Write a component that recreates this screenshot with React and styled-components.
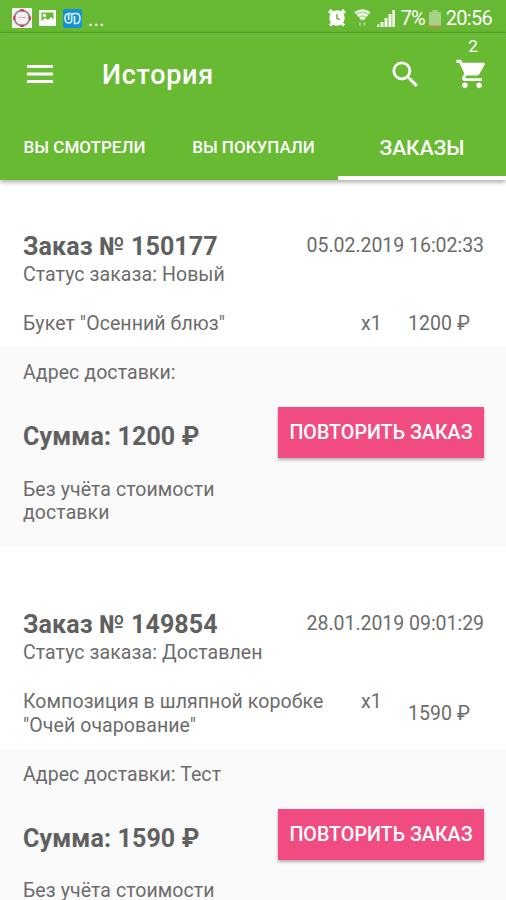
import React from 'react';
import styled, { createGlobalStyle } from 'styled-components';

const GlobalStyle = createGlobalStyle`
  * { box-sizing: border-box; }
  body {
    margin: 0;
    background: #fff;
    font-family: Roboto, "Liberation Sans", sans-serif;
    color: #6c6c6c;
  }
`;

const Screen = styled.div`
  display: flex;
  flex-direction: column;
  width: 506px;
  height: 900px;
  overflow: hidden;
`;

const StatusBar = styled.div`
  flex: none;
  display: flex;
  align-items: center;
  justify-content: space-between;
  height: 33px;
  padding: 4px 14px 0 12px;
  background: #67b832;
  border-bottom: 1px solid #5ca52c;
  color: #fff;
`;

const StatusGroup = styled.div`
  display: flex;
  align-items: center;
`;

const Glyph = styled.svg`
  flex: none;
  display: block;
  margin-left: ${p => p.$gap || 0}px;
`;

const StatusText = styled.span`
  font-size: 20px;
  line-height: 28px;
  margin-left: ${p => p.$gap || 0}px;
  padding-top: ${p => p.$drop || 0}px;
  letter-spacing: ${p => p.$spacing || 0}px;
  white-space: nowrap;
`;

const Header = styled.header`
  flex: none;
  position: relative;
  z-index: 1;
  height: 147px;
  background: #68ba33;
  color: #fff;
  box-shadow: 0 2px 5px rgba(0, 0, 0, 0.35);
`;

const Toolbar = styled.div`
  display: flex;
  align-items: center;
  height: 82px;
  padding: 0 17px 0 26px;
`;

const IconButton = styled.button`
  position: relative;
  display: flex;
  border: none;
  padding: 0;
  background: none;
  color: inherit;
  font-family: inherit;
  margin-left: ${p => p.$gap || 0}px;
`;

const Title = styled.h1`
  flex: 1;
  margin: 2px 0 0 48px;
  font-size: 27px;
  line-height: 32px;
  font-weight: 500;
  letter-spacing: 0.7px;
`;

const Badge = styled.span`
  position: absolute;
  top: -21px;
  left: 1px;
  width: 100%;
  text-align: center;
  font-size: 17px;
  line-height: 20px;
`;

const Tabs = styled.nav`
  display: grid;
  grid-template-columns: 169px 169px 168px;
  height: 65px;
`;

const Tab = styled.a`
  display: flex;
  align-items: center;
  justify-content: center;
  padding-top: ${p => (p.$active ? 4 : 2)}px;
  border-bottom: 4px solid ${p => (p.$active ? '#fff' : 'transparent')};
  font-size: ${p => (p.$active ? 21 : 17)}px;
  font-weight: 500;
  white-space: nowrap;
`;

const Order = styled.section`
  flex: none;
  padding-top: ${p => (p.$first ? 51 : 62)}px;
`;

const Row = styled.div`
  display: flex;
  justify-content: space-between;
  padding: 0 22px 0 23px;
`;

const Heading = styled.h2`
  margin: 0;
  padding-top: 1px;
  font-size: 25px;
  line-height: 29px;
  font-weight: 700;
  letter-spacing: 0.13px;
  color: #606060;
  white-space: nowrap;
`;

const Text = styled.div`
  font-size: 19.5px;
  line-height: 23.4px;
  letter-spacing: 0.08px;
  white-space: ${p => (p.$wrap ? 'normal' : 'nowrap')};
`;

const OrderDate = styled(Text)`
  padding-top: 3px;
  letter-spacing: -0.03px;
`;

const Status = styled(Text)`
  padding: 1.6px 23px 0;
`;

const Item = styled.div`
  display: grid;
  grid-template-columns: 338px 47px 1fr;
  padding: 26px 22px 11.9px 23px;
`;

const Price = styled(Text)`
  align-self: center;
`;

const Summary = styled.div`
  height: 200px;
  padding-top: 14px;
  background: #fafafa;
`;

const Address = styled(Text)`
  padding: 0 23px;
`;

const SumRow = styled(Row)`
  align-items: center;
  height: 51px;
  margin-top: 22.6px;
`;

const Total = styled(Heading)`
  padding-top: 7px;
`;

const RepeatButton = styled.button`
  width: 206px;
  height: 51px;
  padding: 0;
  border: none;
  background: #f14c82;
  color: #fff;
  font-family: inherit;
  font-size: 19.7px;
  font-weight: 500;
  white-space: nowrap;
  box-shadow: 0 2px 3px rgba(0, 0, 0, 0.3);
`;

const Note = styled(Text)`
  width: 240px;
  padding: 19.400px 0 0 23px;
`;

const orders = [
  {
    number: '150177',
    date: '05.02.2019 16:02:33',
    status: 'Новый',
    item: ['Букет "Осенний блюз"'],
    address: '',
    price: '1200 ₽',
  },
  {
    number: '149854',
    date: '28.01.2019 09:01:29',
    status: 'Доставлен',
    item: ['Композиция в шляпной коробке', '"Очей очарование"'],
    address: 'Тест',
    price: '1590 ₽',
  },
];

function StatusIcons() {
  return (
    <StatusBar>
      <StatusGroup>
        <Glyph width="20" height="20" viewBox="0 0 20 20">
          <rect width="20" height="20" fill="#f5f0f0" />
          <circle cx="10" cy="10" r="7.6" fill="none" stroke="#9a8d92" strokeWidth="2" />
          <circle cx="10" cy="10" r="7.8" fill="none" stroke="#c94468" strokeWidth="2.2" strokeDasharray="4 8.2" strokeDashoffset="2" />
          <path d="M6 9.5h8" stroke="#d9b5bf" strokeWidth="1.2" />
        </Glyph>
        <Glyph $gap={7} width="17" height="16" viewBox="0 0 17 16">
          <path fill="#fff" fillRule="evenodd" d="M1 0h15a1 1 0 0 1 1 1v14a1 1 0 0 1-1 1H1a1 1 0 0 1-1-1V1a1 1 0 0 1 1-1zM2.500 2.500v8.500l3.500-3 3 2 3-3 2.500 3V2.500z" />
          <circle cx="5.500" cy="5.500" r="1.700" fill="#fff" />
        </Glyph>
        <Glyph $gap={7} width="19" height="19" viewBox="0 0 19 19">
          <rect width="19" height="19" rx="2" fill="#1592d0" />
          <path d="M8.500 4.500H6C3 4.500 2 6.500 2 9s1 5 4 5c2 0 2.700-1 2.700-3V7c0-2 .8-2.500 2.300-2.500h2c3 0 4 2 4 4.500s-1 5.500-4 5.500h-1.500V7M5.700 5v6" fill="none" stroke="#d8f0fb" strokeWidth="1.600" />
        </Glyph>
        <StatusText $gap={6} $drop={1} $spacing={0.4}>...</StatusText>
      </StatusGroup>
      <StatusGroup>
        <Glyph width="18" height="18" viewBox="0 0 18 18">
          <circle cx="9" cy="9" r="7.700" fill="#fff" />
          <path d="M1 4l3-3M14 1l3 3M2 16.500l3-3M16 16.500l-3-3" stroke="#fff" strokeWidth="3" />
          <path d="M9 5v4.500l3 1" fill="none" stroke="#68ba33" strokeWidth="1.500" />
        </Glyph>
        <Glyph $gap={8} width="17" height="18" viewBox="0 0 17 18">
          <path d="M1 4Q8.500-1.500 16 4l-7.500 8z" fill="#b5dc9b" />
          <path d="M1 4Q8.500-1.500 16 4M3.500 7q5-3.500 10 0M6 10q2.500-2 5 0" fill="none" stroke="#f1f9ec" strokeWidth="1.800" />
          <path d="M6 13.500v3.500M10.500 13v3.500" stroke="#a9d68a" strokeWidth="1.800" />
        </Glyph>
        <Glyph $gap={6} width="18" height="18" viewBox="0 0 18 18">
          <path d="M0 15.500h2.500V18H0zM3.500 13h3v5h-3zM7.500 9h3v9h-3zM11.500 5h3v13h-3zM15.300 1H18v17h-2.700z" fill="#f3faee" />
        </Glyph>
        <StatusText $gap={6} $spacing={-1}>7%</StatusText>
        <Glyph $gap={4} width="12" height="17" viewBox="0 0 12 17">
          <path d="M3.500 0h5v2H12v15H0V2h3.500z" fill="#a5d386" />
          <path d="M0 15.500h12V17H0z" fill="#e5793f" />
        </Glyph>
        <StatusText $gap={5} $spacing={-0.7}>20:56</StatusText>
      </StatusGroup>
    </StatusBar>
  );
}

function OrderCard({ order, first }) {
  return (
    <Order $first={first}>
      <Row>
        <Heading>Заказ № {order.number}</Heading>
        <OrderDate>{order.date}</OrderDate>
      </Row>
      <Status>Статус заказа: {order.status}</Status>
      <Item>
        <div>
          {order.item.map(line => <Text key={line}>{line}</Text>)}
        </div>
        <Text>x1</Text>
        <Price>{order.price}</Price>
      </Item>
      <Summary>
        <Address>Адрес доставки: {order.address}</Address>
        <SumRow>
          <Total>Сумма: {order.price}</Total>
          <RepeatButton>ПОВТОРИТЬ ЗАКАЗ</RepeatButton>
        </SumRow>
        <Note $wrap>Без учёта стоимости доставки</Note>
      </Summary>
    </Order>
  );
}

export default function App() {
  return (
    <Screen>
      <GlobalStyle />
      <StatusIcons />
      <Header>
        <Toolbar>
          <IconButton>
            <Glyph width="28" height="20" viewBox="0 0 28 20">
              <path d="M1 2.500h26M1 10h26M1 17.500h26" stroke="#fff" strokeWidth="3" />
            </Glyph>
          </IconButton>
          <Title>История</Title>
          <IconButton>
            <Glyph width="35" height="35" viewBox="0 0 24 24" fill="#fff">
              <path d="M15.500 14h-.79l-.28-.27A6.470 6.470 0 0 0 16 9.500 6.500 6.500 0 1 0 9.500 16c1.610 0 3.090-.59 4.230-1.570l.27.28v.79l5 4.990L20.490 19l-4.990-5zm-6 0C7.010 14 5 11.990 5 9.500S7.010 5 9.500 5 14 7.010 14 9.500 11.990 14 9.500 14z" />
            </Glyph>
          </IconButton>
          <IconButton $gap={32}>
            <Glyph width="34" height="34" viewBox="0 0 24 24" fill="#fff">
              <path d="M7 18c-1.100 0-1.990.9-1.990 2S5.900 22 7 22s2-.9 2-2-.9-2-2-2zM1 2v2h2l3.600 7.590-1.350 2.450c-.16.28-.25.61-.25.960 0 1.100.9 2 2 2h12v-2H7.420c-.14 0-.25-.11-.25-.25l.03-.12.9-1.630h7.450c.75 0 1.410-.41 1.750-1.030l3.580-6.490c.08-.14.12-.31.12-.48 0-.55-.45-1-1-1H5.210l-.94-2H1zm16 16c-1.100 0-1.990.9-1.990 2s.89 2 1.990 2 2-.9 2-2-.9-2-2-2z" />
            </Glyph>
            <Badge>2</Badge>
          </IconButton>
        </Toolbar>
        <Tabs>
          <Tab>ВЫ СМОТРЕЛИ</Tab>
          <Tab>ВЫ ПОКУПАЛИ</Tab>
          <Tab $active>ЗАКАЗЫ</Tab>
        </Tabs>
      </Header>
      {orders.map((order, i) => (
        <OrderCard key={order.number} order={order} first={i === 0} />
      ))}
    </Screen>
  );
}
